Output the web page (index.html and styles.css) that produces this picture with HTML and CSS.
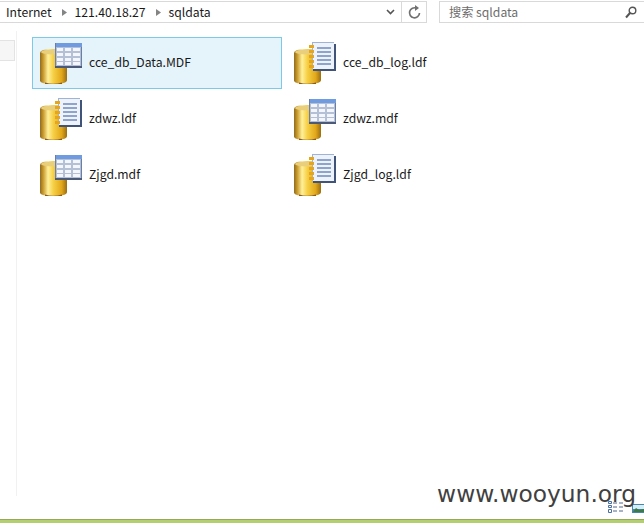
FILE: index.html
```html
<!DOCTYPE html>
<html lang="zh">
<head>
<meta charset="utf-8">
<title>sqldata</title>
<link rel="stylesheet" href="styles.css">
</head>
<body>
<svg class="defs" width="0" height="0" aria-hidden="true">
  <defs>
    <linearGradient id="gold" x1="0" x2="1" y1="0" y2="0">
      <stop offset="0" stop-color="#8f6a20"/>
      <stop offset=".12" stop-color="#c99a2c"/>
      <stop offset=".3" stop-color="#fff09a"/>
      <stop offset=".5" stop-color="#f6cf45"/>
      <stop offset=".8" stop-color="#e2a81a"/>
      <stop offset="1" stop-color="#9a6e14"/>
    </linearGradient>
    <symbol id="cyl" viewBox="0 0 44 44">
      <path d="M0 12Q0 8 13 8T27 12V39Q27 43 13 43T0 39Z" fill="url(#gold)"/>
      <path d="M5 41.500Q13 44 22 41.500V43H5Z" fill="#8a5a20"/>
      <ellipse cx="13" cy="11" rx="12" ry="2.500" fill="#e9cf7c"/>
    </symbol>
    <symbol id="mdf" viewBox="0 0 44 44">
      <use href="#cyl" width="44" height="44"/>
      <rect x="15" y="2" width="27" height="24" fill="#6b7fa6"/>
      <rect x="16" y="2" width="26" height="4" fill="#6f9be0"/>
      <rect x="16" y="6" width="25" height="19" fill="#b4c0d6"/>
      <path d="M17 7h6v3h-6zM25 7h6v3h-6zM33 7h7v3h-7zM17 12h6v3h-6zM25 12h6v3h-6zM33 12h7v3h-7zM17 17h6v3h-6zM25 17h6v3h-6zM33 17h7v3h-7zM17 21h6v3h-6zM25 21h6v3h-6zM33 21h7v3h-7z" fill="#f4f6fb"/>
      <path d="M15 25h27v2H15z" fill="#4b5a78"/>
    </symbol>
    <symbol id="ldf" viewBox="0 0 44 44">
      <use href="#cyl" width="44" height="44"/>
      <rect x="19" y="3" width="23" height="27" fill="#3f5478"/>
      <rect x="18" y="1" width="22" height="27" fill="#eef2f9"/>
      <path d="M18 1h22v1H18zM18 1h1v27h-1z" fill="#9db4d8"/>
      <path d="M23 6h14v2H23zM23 10h14v2H23zM23 14h14v2H23zM23 18h14v2H23zM23 22h14v2H23z" fill="#8ea4cf"/>
      <path d="M15 4h5v3h-5zM15 9h5v3h-5zM15 14h5v3h-5zM15 19h5v3h-5zM15 24h5v3h-5z" fill="#e5a51e"/>
    </symbol>
  </defs>
</svg>
<div class="page">
  <header class="toolbar">
    <div class="address">
      <span class="crumb">Internet</span>
      <svg class="sep" width="5" height="7" viewBox="0 0 5 7"><path d="M0 0l5 3.500-5 3.500z" fill="#848484"/></svg>
      <span class="crumb">121.40.18.27</span>
      <svg class="sep" width="5" height="7" viewBox="0 0 5 7"><path d="M0 0l5 3.500-5 3.500z" fill="#848484"/></svg>
      <span class="crumb">sqldata</span>
      <span class="spacer"></span>
      <span class="addr-btn chevron">
        <svg width="9" height="6" viewBox="0 0 9 6"><path d="M1 1l3.500 3.500L8 1" fill="none" stroke="#555" stroke-width="1.600"/></svg>
      </span>
      <span class="addr-btn refresh">
        <svg width="13" height="14" viewBox="0 0 13 14"><path d="M8.500 3.200A5 5 0 1 0 11.500 8" fill="none" stroke="#707070" stroke-width="1.700"/><path d="M7 0v6l4-3z" fill="#707070"/></svg>
      </span>
    </div>
    <div class="search">
      <span class="search-text">搜索 sqldata</span>
      <svg class="search-icon" width="12" height="13" viewBox="0 0 12 13"><circle cx="7.500" cy="4.500" r="3.300" fill="none" stroke="#555" stroke-width="1.400"/><path d="M5 7l-4 4.500" stroke="#555" stroke-width="2"/></svg>
    </div>
  </header>
  <div class="body">
    <aside class="side"><div class="side-item"></div></aside>
    <main class="files">
      <div class="file selected"><svg class="icon"><use href="#mdf"/></svg><span>cce_db_Data.MDF</span></div>
      <div class="file"><svg class="icon"><use href="#ldf"/></svg><span>cce_db_log.ldf</span></div>
      <div class="file"><svg class="icon"><use href="#ldf"/></svg><span>zdwz.ldf</span></div>
      <div class="file"><svg class="icon"><use href="#mdf"/></svg><span>zdwz.mdf</span></div>
      <div class="file"><svg class="icon"><use href="#mdf"/></svg><span>Zjgd.mdf</span></div>
      <div class="file"><svg class="icon"><use href="#ldf"/></svg><span>Zjgd_log.ldf</span></div>
    </main>
  </div>
  <footer class="greenbar"></footer>
  <div class="viewbtns">
    <svg width="15" height="12" viewBox="0 0 15 12"><path d="M.5.500h3v2h-3zM.5 4.500h3v2h-3zM.5 8.500h3v3h-3z" fill="#fff" stroke="#4a6fa5"/><path d="M5 2h4M11 2h4M5 6h4M11 6h4M5 10h4M11 10h4" stroke="#50688c"/></svg>
    <svg width="12" height="9" viewBox="0 0 12 9"><rect width="12" height="9" fill="#4a86a8"/><rect x="1" y="1" width="11" height="4" fill="#d6eef8"/><path d="M1 8l3-4 3 2 5-1v3z" fill="#3c7a4a"/></svg>
  </div>
  <div class="watermark">www.wooyun.org</div>
</div>
</body>
</html>
```

FILE: styles.css
```css
* { box-sizing: border-box; }
html, body { margin: 0; height: 100%; background: #fff; overflow: hidden; }
.defs { position: absolute; }
.page {
  position: relative;
  display: flex;
  flex-direction: column;
  width: 644px;
  height: 523px;
  font-family: "Noto Sans CJK SC", "Noto Sans", sans-serif;
  font-size: 12.2px;
  color: #1a1a1a;
}
.toolbar {
  display: flex;
  height: 22px;
  margin-top: 1px;
  gap: 12px;
}
.address {
  display: flex;
  align-items: center;
  width: 427px;
  border: 1px solid #d9d9d9;
  border-left: 0;
  padding-left: 6px;
}
.crumb { line-height: 20px; }
.sep { margin: 0 8px 0 10px; }
.spacer { flex: 1; }
.addr-btn {
  display: flex;
  align-items: center;
  justify-content: center;
  height: 100%;
}
.chevron { width: 22px; }
.refresh { width: 25px; border-left: 1px solid #d9d9d9; }
.search {
  display: flex;
  align-items: center;
  justify-content: space-between;
  flex: 1;
  border: 1px solid #d9d9d9;
  border-right: 0;
  padding: 0 7px 0 9px;
  color: #6d6d6d;
}
.body { display: flex; flex: 1; min-height: 0; }
.side {
  width: 17px;
  margin: 8px 0 23px;
  border-right: 1px solid #f1f1f1;
  padding-top: 9px;
}
.side-item {
  height: 21px;
  width: 15px;
  background: #f6f6f6;
  border: 1px solid #e3e3e3;
  border-left: 0;
}
.files {
  display: grid;
  grid-template-columns: 250px 250px;
  grid-auto-rows: 52px;
  column-gap: 4px;
  row-gap: 4px;
  align-content: start;
  padding: 14px 0 0 15px;
}
.file {
  display: flex;
  align-items: center;
  gap: 5px;
  padding-left: 7px;
  border: 1px solid transparent;
}
.file span { position: relative; top: -1px; }
.selected { background: #e5f3fa; border-color: #7ec8e8; }
.icon { width: 44px; height: 44px; flex: none; }
.greenbar {
  height: 4px;
  background: #b4d06e;
  border-top: 1px solid #93a95c;
}
.viewbtns {
  position: absolute;
  right: 0;
  top: 501px;
  display: flex;
  gap: 9px;
  align-items: flex-end;
}
.watermark {
  position: absolute;
  right: 8px;
  top: 481px;
  font-family: "DejaVu Sans", sans-serif;
  font-size: 23.3px;
  line-height: 26px;
  color: #404040;
}
```
